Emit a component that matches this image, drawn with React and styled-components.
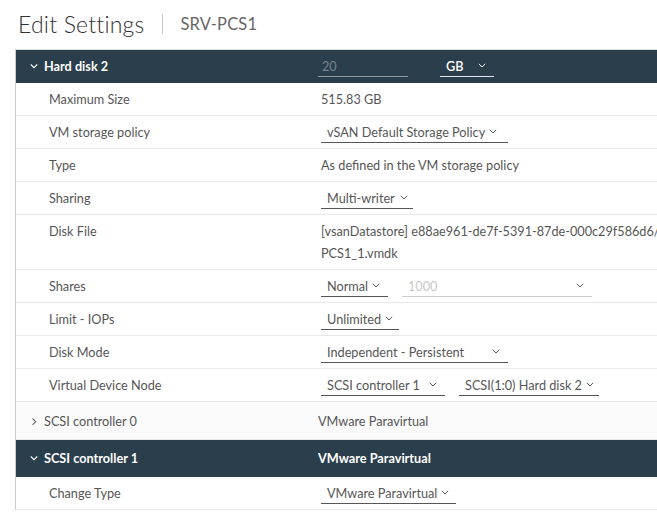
import React from 'react'
import styled, { createGlobalStyle } from 'styled-components'

const GlobalStyle = createGlobalStyle`
  html, body {
    margin: 0;
    padding: 0;
    background: #fff;
    overflow: hidden;
  }
  body {
    font-family: Lato, "Open Sans", sans-serif;
    color: #565656;
  }
`

const Page = styled.div`
  width: 657px;
  height: 518px;
  overflow: hidden;
`

const TitleBar = styled.div`
  display: flex;
  align-items: center;
  height: 49px;
  padding-left: 18px;
  padding-bottom: 1px;
  box-sizing: border-box;
`

const Title = styled.h1`
  margin: 0;
  font-size: 23px;
  font-weight: 300;
  color: #313131;
  letter-spacing: 0.2px;
`

const Divider = styled.span`
  width: 1px;
  height: 20px;
  margin: 0 17px 0 18px;
  background: #cccccc;
`

const SubTitle = styled.span`
  font-size: 16.5px;
  font-weight: 400;
  color: #666;
  letter-spacing: 0.2px;
`

const Table = styled.div`
  margin-left: 15px;
  width: 720px;
  border-left: 1px solid #cccccc;
  border-top: 1px solid #dddddd;
`

const Row = styled.div`
  display: grid;
  grid-template-columns: 302px 1fr;
  align-items: ${(p) => (p.top ? 'start' : 'center')};
  min-height: ${(p) => p.height || 33}px;
  box-sizing: border-box;
  border-bottom: 1px solid ${(p) => (p.dark ? 'transparent' : '#e8e8e8')};
  background: ${(p) => (p.dark ? '#2b3e4b' : p.shaded ? '#fafafa' : '#fff')};
  color: ${(p) => (p.dark ? '#fff' : '#565656')};
  font-size: 12.7px;
  padding: ${(p) => (p.top ? '5px 0' : '0')};
`

const GroupLabel = styled.div`
  display: flex;
  align-items: center;
  padding-left: 14px;
  font-weight: ${(p) => (p.dark ? 700 : 400)};
`

const Caret = styled.svg`
  width: 8px;
  height: 8px;
  margin-right: 6px;
  flex: none;
`

const Label = styled.div`
  padding-left: 33px;
  line-height: 22px;
`

const Value = styled.div`
  display: flex;
  align-items: center;
  gap: 14px;
  padding-left: ${(p) => (p.head ? 0 : 3)}px;
  line-height: 22px;
  font-weight: ${(p) => (p.bold ? 700 : 400)};
  white-space: nowrap;
`

const Text = styled.span`
  display: block;
`

const Lines = styled.div`
  display: flex;
  flex-direction: column;
  padding-left: 3px;
  line-height: 22px;
  white-space: nowrap;
`

const Select = styled.div`
  display: inline-flex;
  align-items: center;
  box-sizing: border-box;
  width: ${(p) => p.width}px;
  height: 22px;
  padding: 0 ${(p) => p.pr || 8}px 0 6px;
  border-bottom: 1px solid ${(p) => (p.disabled ? '#cccccc' : p.light ? '#e6e6e6' : '#565656')};
  color: ${(p) => (p.disabled ? '#c8c8c8' : p.light ? '#fff' : '#565656')};
  font-weight: ${(p) => (p.light ? 600 : 400)};
`

const SelectText = styled.span`
  margin-right: 4px;
`

const Chevron = styled.svg`
  margin-left: auto;
  width: 8px;
  height: 5px;
  flex: none;
`

const NumberInput = styled.div`
  box-sizing: border-box;
  width: 90px;
  height: 22px;
  padding-left: 4px;
  line-height: 22px;
  border-bottom: 1px solid #8c989f;
  color: #76848d;
  font-weight: 400;
  margin-right: 18px;
`

function Down({ color = '#565656' }) {
  return (
    <Chevron viewBox="0 0 8 5">
      <path d="M0.8 0.8 L4 4 L7.2 0.8" fill="none" stroke={color} strokeWidth="1" />
    </Chevron>
  )
}

function Dropdown({ text, width, pr, disabled, light, chevronColor }) {
  return (
    <Select width={width} pr={pr} disabled={disabled} light={light}>
      <SelectText>{text}</SelectText>
      <Down color={chevronColor || (light ? '#fff' : '#565656')} />
    </Select>
  )
}

function GroupCaret({ open, color }) {
  return (
    <Caret viewBox="0 0 8 8">
      {open ? (
        <path d="M0.8 2.5 L4 5.7 L7.2 2.5" fill="none" stroke={color} strokeWidth="1.1" />
      ) : (
        <path d="M2.5 1.5 L5.7 4.7 L2.5 7.9" fill="none" stroke={color} strokeWidth="1.1" />
      )}
    </Caret>
  )
}

const diskRows = [
  { label: 'Maximum Size', value: '515.83 GB' },
  { label: 'VM storage policy', select: [{ text: 'vSAN Default Storage Policy', width: 187, pr: 15 }] },
  { label: 'Type', value: 'As defined in the VM storage policy' },
  { label: 'Sharing', select: [{ text: 'Multi-writer', width: 92, pr: 5 }] },
]

const diskRows2 = [
  {
    label: 'Shares',
    select: [
      { text: 'Normal', width: 67 },
      { text: '1000', width: 190, disabled: true, chevronColor: '#565656' },
    ],
  },
  { label: 'Limit - IOPs', select: [{ text: 'Unlimited', width: 78 }] },
  { label: 'Disk Mode', select: [{ text: 'Independent - Persistent', width: 187 }] },
  {
    label: 'Virtual Device Node',
    select: [
      { text: 'SCSI controller 1', width: 124 },
      { text: 'SCSI(1:0) Hard disk 2', width: 140, pr: 14 },
    ],
  },
]

function DetailRow({ row }) {
  return (
    <Row>
      <Label>{row.label}</Label>
      <Value>
        {row.value && <Text>{row.value}</Text>}
        {row.select && row.select.map((s) => <Dropdown key={s.text} {...s} />)}
      </Value>
    </Row>
  )
}

export default function App() {
  return (
    <Page>
      <GlobalStyle />
      <TitleBar>
        <Title>Edit Settings</Title>
        <Divider />
        <SubTitle>SRV-PCS1</SubTitle>
      </TitleBar>
      <Table>
        <Row dark height={33}>
          <GroupLabel dark>
            <GroupCaret open color="#fff" />
            Hard disk 2
          </GroupLabel>
          <Value head>
            <NumberInput>20</NumberInput>
            <Dropdown text="GB" width={54} light />
          </Value>
        </Row>
        {diskRows.map((r) => (
          <DetailRow key={r.label} row={r} />
        ))}
        <Row top height={55}>
          <Label>Disk File</Label>
          <Lines>
            <span>[vsanDatastore] e88ae961-de7f-5391-87de-000c29f586d6/SRV-</span>
            <span>PCS1_1.vmdk</span>
          </Lines>
        </Row>
        {diskRows2.map((r) => (
          <DetailRow key={r.label} row={r} />
        ))}
        <Row shaded height={38}>
          <GroupLabel>
            <GroupCaret color="#6b6b6b" />
            SCSI controller 0
          </GroupLabel>
          <Value head>
            <Text>VMware Paravirtual</Text>
          </Value>
        </Row>
        <Row dark height={37}>
          <GroupLabel dark>
            <GroupCaret open color="#fff" />
            SCSI controller 1
          </GroupLabel>
          <Value head bold>
            <Text>VMware Paravirtual</Text>
          </Value>
        </Row>
        <Row>
          <Label>Change Type</Label>
          <Value>
            <Dropdown text="VMware Paravirtual" width={135} />
          </Value>
        </Row>
      </Table>
    </Page>
  )
}
